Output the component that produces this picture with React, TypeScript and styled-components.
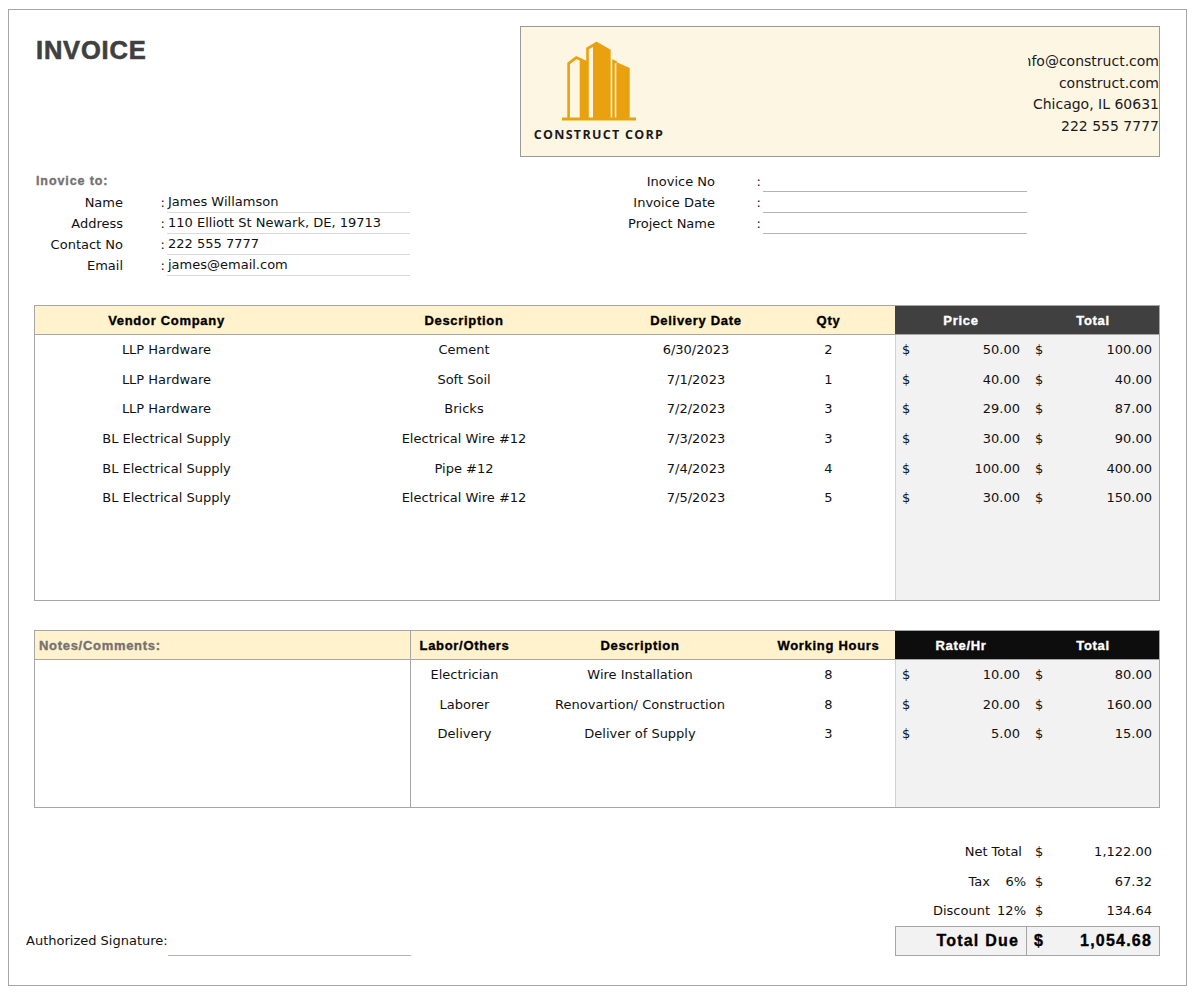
import React from 'react';
import styled, { createGlobalStyle, css } from 'styled-components';

const GOLD = '#e9a10f';
const CREAM = '#fdf6e3';
const HEAD_BG = '#fff2cc';
const LINE = '#a6a6a6';

const items = [
  { vendor: 'LLP Hardware', desc: 'Cement', date: '6/30/2023', qty: 2, price: '50.00', total: '100.00' },
  { vendor: 'LLP Hardware', desc: 'Soft Soil', date: '7/1/2023', qty: 1, price: '40.00', total: '40.00' },
  { vendor: 'LLP Hardware', desc: 'Bricks', date: '7/2/2023', qty: 3, price: '29.00', total: '87.00' },
  { vendor: 'BL Electrical Supply', desc: 'Electrical Wire #12', date: '7/3/2023', qty: 3, price: '30.00', total: '90.00' },
  { vendor: 'BL Electrical Supply', desc: 'Pipe #12', date: '7/4/2023', qty: 4, price: '100.00', total: '400.00' },
  { vendor: 'BL Electrical Supply', desc: 'Electrical Wire #12', date: '7/5/2023', qty: 5, price: '30.00', total: '150.00' },
];

const labor = [
  { role: 'Electrician', desc: 'Wire Installation', hours: 8, rate: '10.00', total: '80.00' },
  { role: 'Laborer', desc: 'Renovartion/ Construction', hours: 8, rate: '20.00', total: '160.00' },
  { role: 'Delivery', desc: 'Deliver of Supply', hours: 3, rate: '5.00', total: '15.00' },
];

const GlobalStyle = createGlobalStyle`
  * { box-sizing: border-box; }
  body {
    margin: 0;
    background: #fff;
    color: #111;
    font-family: "DejaVu Sans", "Liberation Sans", sans-serif;
    font-size: 13px;
  }
`;

const heading = css`
  font-family: "Liberation Sans", Arial, sans-serif;
  font-weight: 700;
  letter-spacing: 0.7px;
  -webkit-text-stroke: 0.35px currentColor;
`;

// three towers on a base line, each with a hollow left edge and a solid right face
const Logo: React.FC = () => (
  <svg width="74" height="80" viewBox="0 0 74 80">
    <g fill={GOLD}>
      <polygon points="17.7,17.8 25,21.2 25,77 17.7,77" />
      <polygon points="31,3.4 35.3,1 48.7,8.7 48.7,77 31,77" />
      <polygon points="54.3,20.9 67.7,27 67.7,77 54.3,77" />
      <rect x="0" y="76.5" width="74" height="3" />
    </g>
    <g stroke={GOLD} strokeWidth="2.6" fill="none">
      <path d="M6.6 77V22.4L14.3 16.6L24.5 21.2" />
      <path d="M25.5 77V7.6L35.3 1.6" />
      <path d="M51.5 77V20.2L54.5 21.4" />
    </g>
  </svg>
);

const App: React.FC = () => (
  <>
    <GlobalStyle />
    <Sheet>
      <TopRow>
        <Title>INVOICE</Title>
        <BrandBox>
          <Brand>
            <Logo />
            <BrandName>CONSTRUCT CORP</BrandName>
          </Brand>
          <Contact>
            <ContactLine>info@construct.com</ContactLine>
            <ContactLine>construct.com</ContactLine>
            <ContactLine>Chicago, IL 60631</ContactLine>
            <ContactLine>222 555 7777</ContactLine>
          </Contact>
        </BrandBox>
      </TopRow>

      <InfoRow>
        <BillTo>
          <SectionLabel>Inovice to:</SectionLabel>
          <FieldLabel>Name</FieldLabel>
          <Colon>:</Colon>
          <FieldValue>James Willamson</FieldValue>
          <FieldLabel>Address</FieldLabel>
          <Colon>:</Colon>
          <FieldValue>110 Elliott St Newark, DE, 19713</FieldValue>
          <FieldLabel>Contact No</FieldLabel>
          <Colon>:</Colon>
          <FieldValue>222 555 7777</FieldValue>
          <FieldLabel>Email</FieldLabel>
          <Colon>:</Colon>
          <FieldValue>james@email.com</FieldValue>
        </BillTo>
        <MetaBlock>
          <FieldLabel>Inovice No</FieldLabel>
          <Colon>:</Colon>
          <FieldValue $strong />
          <FieldLabel>Invoice Date</FieldLabel>
          <Colon>:</Colon>
          <FieldValue $strong />
          <FieldLabel>Project Name</FieldLabel>
          <Colon>:</Colon>
          <FieldValue $strong />
        </MetaBlock>
      </InfoRow>

      <Table $height={296} $gap={29.5}>
        <HeadRow $cols="263px 332px 132px 133px 132px 132px">
          <HeadCell>Vendor Company</HeadCell>
          <HeadCell>Description</HeadCell>
          <HeadCell>Delivery Date</HeadCell>
          <HeadCell>Qty</HeadCell>
          <HeadCell $tone="#404040">Price</HeadCell>
          <HeadCell $tone="#404040">Total</HeadCell>
        </HeadRow>
        <Body>
          <BodyGrid $cols="263px 332px 132px 133px">
            {items.map((it, i) => (
              <React.Fragment key={i}>
                <Cell>{it.vendor}</Cell>
                <Cell>{it.desc}</Cell>
                <Cell>{it.date}</Cell>
                <Cell>{it.qty}</Cell>
              </React.Fragment>
            ))}
          </BodyGrid>
          <MoneyPanel>
            {items.map((it, i) => (
              <React.Fragment key={i}>
                <MoneyCell $left={6}><span>$</span><span>{it.price}</span></MoneyCell>
                <MoneyCell $left={8}><span>$</span><span>{it.total}</span></MoneyCell>
              </React.Fragment>
            ))}
          </MoneyPanel>
        </Body>
      </Table>

      <Table $height={178} $gap={29}>
        <HeadRow $cols="376px 107px 244px 133px 132px 132px">
          <NotesHead>Notes/Comments:</NotesHead>
          <HeadCell>Labor/Others</HeadCell>
          <HeadCell>Description</HeadCell>
          <HeadCell>Working Hours</HeadCell>
          <HeadCell $tone="#0d0d0d">Rate/Hr</HeadCell>
          <HeadCell $tone="#0d0d0d">Total</HeadCell>
        </HeadRow>
        <Body>
          <NotesArea />
          <BodyGrid $cols="107px 244px 133px">
            {labor.map((l, i) => (
              <React.Fragment key={i}>
                <Cell>{l.role}</Cell>
                <Cell>{l.desc}</Cell>
                <Cell>{l.hours}</Cell>
              </React.Fragment>
            ))}
          </BodyGrid>
          <MoneyPanel>
            {labor.map((l, i) => (
              <React.Fragment key={i}>
                <MoneyCell $left={6}><span>$</span><span>{l.rate}</span></MoneyCell>
                <MoneyCell $left={8}><span>$</span><span>{l.total}</span></MoneyCell>
              </React.Fragment>
            ))}
          </MoneyPanel>
        </Body>
      </Table>

      <Footer>
        <Signature>
          <SignLabel>Authorized Signature:</SignLabel>
          <SignLine />
        </Signature>
        <Totals>
          <TotalLine>
            <TotalLabel $span>Net Total</TotalLabel>
            <Amount><span>$</span><span>1,122.00</span></Amount>
          </TotalLine>
          <TotalLine>
            <TotalLabel>Tax</TotalLabel>
            <Pct>6%</Pct>
            <Amount><span>$</span><span>67.32</span></Amount>
          </TotalLine>
          <TotalLine>
            <TotalLabel>Discount</TotalLabel>
            <Pct>12%</Pct>
            <Amount><span>$</span><span>134.64</span></Amount>
          </TotalLine>
          <TotalDue>
            <DueLabel>Total Due</DueLabel>
            <DueAmount><span>$</span><span>1,054.68</span></DueAmount>
          </TotalDue>
        </Totals>
      </Footer>
    </Sheet>
  </>
);

const Sheet = styled.div`
  margin: 9px 0 0 8px;
  width: 1179px;
  height: 977px;
  border: 1px solid ${LINE};
  padding: 16px 26px 0 25px;
`;

const TopRow = styled.div`
  display: flex;
  justify-content: space-between;
  height: 131px;
`;

const Title = styled.h1`
  margin: 8.5px 0 0 2px;
  font-family: "Liberation Sans", Arial, sans-serif;
  font-size: 25.5px;
  line-height: 30px;
  font-weight: 700;
  letter-spacing: 0.8px;
  color: #404040;
  -webkit-text-stroke: 0.6px #404040;
`;

const BrandBox = styled.div`
  width: 640px;
  height: 131px;
  border: 1px solid #999;
  background: ${CREAM};
  display: flex;
  justify-content: space-between;
`;

const Brand = styled.div`
  display: flex;
  flex-direction: column;
  align-items: center;
  width: 134px;
  margin-left: 11px;
  padding-top: 14px;

  svg {
    display: block;
  }
`;

const BrandName = styled.div`
  margin-top: 6px;
  font-family: "Open Sans", "Liberation Sans", sans-serif;
  font-weight: 700;
  font-size: 12.5px;
  line-height: 16px;
  letter-spacing: 1.3px;
  color: #1a1a1a;
  white-space: nowrap;
`;

const Contact = styled.div`
  width: 131px;
  padding-top: 24px;
  overflow: hidden;
  display: flex;
  flex-direction: column;
`;

const ContactLine = styled.div`
  display: flex;
  justify-content: flex-end;
  white-space: nowrap;
  font-size: 14px;
  line-height: 21.7px;
  color: #1a1a1a;
`;

const InfoRow = styled.div`
  display: flex;
  margin-top: 13.5px;
  height: 105px;
`;

const BillTo = styled.div`
  display: grid;
  grid-template-columns: 94px 39px 243px;
  grid-auto-rows: 21px;
  align-items: center;
`;

const MetaBlock = styled.div`
  display: grid;
  grid-template-columns: 120px 43px 264px;
  grid-auto-rows: 21px;
  align-items: center;
  margin-left: 190px;
`;

const SectionLabel = styled.div`
  grid-column: 1 / -1;
  padding-left: 2px;
  ${heading};
  font-size: 12.5px;
  letter-spacing: 0.9px;
  color: #767171;
`;

const FieldLabel = styled.div`
  text-align: right;
  padding-right: 5px;
  line-height: 21px;
`;

const Colon = styled.div`
  text-align: right;
  padding-right: 2px;
  line-height: 21px;
`;

const FieldValue = styled.div<{ $strong?: boolean }>`
  height: 21px;
  line-height: 20px;
  padding-left: 1px;
  border-bottom: 1px solid ${({ $strong }) => ($strong ? '#b4b4b4' : '#d9d9d9')};
`;

const Table = styled.div<{ $height: number; $gap: number }>`
  display: flex;
  flex-direction: column;
  height: ${({ $height }) => $height}px;
  margin-top: ${({ $gap }) => $gap}px;
  border: 1px solid ${LINE};
`;

const HeadRow = styled.div<{ $cols: string }>`
  display: grid;
  grid-template-columns: ${({ $cols }) => $cols};
  height: 29px;
  border-bottom: 1px solid ${LINE};
  background: ${HEAD_BG};
`;

const HeadCell = styled.div<{ $tone?: string }>`
  display: flex;
  align-items: center;
  justify-content: center;
  ${heading};
  font-size: 13px;
  color: ${({ $tone }) => ($tone ? '#fff' : '#000')};
  background: ${({ $tone }) => $tone || 'transparent'};
`;

const NotesHead = styled(HeadCell)`
  justify-content: flex-start;
  padding-left: 4px;
  color: #767171;
  border-right: 1px solid ${LINE};
`;

const Body = styled.div`
  flex: 1;
  display: flex;
`;

const BodyGrid = styled.div<{ $cols: string }>`
  display: grid;
  grid-template-columns: ${({ $cols }) => $cols};
  grid-auto-rows: 29.6px;
  align-content: start;
`;

const NotesArea = styled.div`
  width: 376px;
  border-right: 1px solid ${LINE};
`;

const Cell = styled.div`
  display: flex;
  align-items: center;
  justify-content: center;
  white-space: nowrap;
`;

const MoneyPanel = styled.div`
  width: 264px;
  background: #f2f2f2;
  border-left: 1px solid #d0d0d0;
  display: grid;
  grid-template-columns: 131px 132px;
  grid-auto-rows: 29.6px;
  align-content: start;
`;

const MoneyCell = styled.div<{ $left: number }>`
  display: flex;
  align-items: center;
  justify-content: space-between;
  padding: 0 7px 0 ${({ $left }) => $left}px;
`;

const Footer = styled.div`
  display: flex;
  justify-content: space-between;
  align-items: flex-end;
  margin-top: 29px;
`;

const Signature = styled.div`
  display: flex;
  align-items: center;
  height: 30px;
  margin-left: -8px;
`;

const SignLabel = styled.div`
  flex: 0 0 141px;
  white-space: nowrap;
`;

const SignLine = styled.div`
  flex: 0 0 243px;
  height: 30px;
  border-bottom: 1px solid #b4b4b4;
`;

const Totals = styled.div`
  width: 265px;
`;

const TotalLine = styled.div`
  display: grid;
  grid-template-columns: 100px 32px 133px;
  height: 29.6px;
  align-items: center;
`;

const TotalLabel = styled.div<{ $span?: boolean }>`
  grid-column: ${({ $span }) => ($span ? '1 / 3' : 'auto')};
  text-align: right;
  padding-right: 5px;
`;

const Pct = styled.div`
  text-align: right;
  padding-right: 1px;
`;

const Amount = styled.div`
  display: flex;
  justify-content: space-between;
  padding: 0 8px;
`;

const TotalDue = styled.div`
  display: grid;
  grid-template-columns: 131px 132px;
  height: 30px;
  border: 1px solid ${LINE};
  background: #f2f2f2;
  ${heading};
  font-size: 16px;
  letter-spacing: 1.2px;
  color: #000;
`;

const DueLabel = styled.div`
  display: flex;
  align-items: center;
  justify-content: flex-end;
  padding-right: 7px;
  border-right: 1px solid ${LINE};
`;

const DueAmount = styled.div`
  display: flex;
  align-items: center;
  justify-content: space-between;
  padding: 0 7px 0 7px;
`;

export default App;
